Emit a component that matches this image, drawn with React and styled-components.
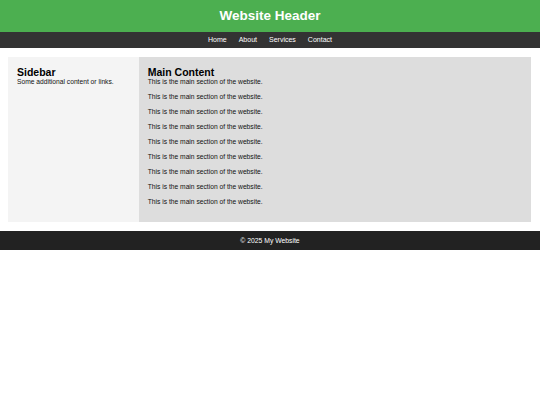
import React from 'react'
import styled, { createGlobalStyle } from 'styled-components'

const GlobalStyle = createGlobalStyle`
    body {
        margin: 0;
        font-family: "Liberation Sans", Arial, sans-serif;
        background: #fff;
    }
`;

const Header = styled.header`
    background: #4caf50;
    color: #fff;
    text-align: center;
    padding: 7px 0;
    h1 {
        margin: 0;
        font-size: 13.5px;
        line-height: 18px;
    }
`;

const Nav = styled.nav`
    background: #333;
    display: flex;
    justify-content: center;
    gap: 12px;
    padding: 4px 0;
    a {
        color: #fff;
        text-decoration: none;
        font-size: 7px;
        line-height: 8px;
    }
`;

const Container = styled.div`
    display: flex;
    margin: 9px 9px 9px 8px;
`;

const Sidebar = styled.aside`
    flex: 0 0 25%;
    background: #f4f4f4;
    padding: 9px;
    box-sizing: border-box;
`;

const Main = styled.main`
    flex: 1;
    background: #ddd;
    padding: 9px;
`;

const Heading = styled.h2`
    margin: 0;
    font-size: 10.5px;
    line-height: 12px;
    color: #000;
`;

const Text = styled.p`
    margin: 0 0 7px;
    font-size: 6.7px;
    line-height: 8px;
    color: #111;
`;

const SideText = styled.p`
    margin: 0;
    font-size: 6.7px;
    line-height: 8px;
    color: #111;
`;

const Footer = styled.footer`
    background: #222;
    color: #fff;
    text-align: center;
    font-size: 6.8px;
    line-height: 8px;
    padding: 6px 0 5px;
`;

export default function App() {
    const lines = Array.from({ length: 9 })
    return (
        <>
            <GlobalStyle />
            <Header>
                <h1>Website Header</h1>
            </Header>
            <Nav>
                <a href="#">Home</a>
                <a href="#">About</a>
                <a href="#">Services</a>
                <a href="#">Contact</a>
            </Nav>
            <Container>
                <Sidebar>
                    <Heading>Sidebar</Heading>
                    <SideText>Some additional content or links.</SideText>
                </Sidebar>
                <Main>
                    <Heading>Main Content</Heading>
                    {lines.map((_, i) => (
                        <Text key={i}>This is the main section of the website.</Text>
                    ))}
                </Main>
            </Container>
            <Footer>© 2025 My Website</Footer>
        </>
    )
}
